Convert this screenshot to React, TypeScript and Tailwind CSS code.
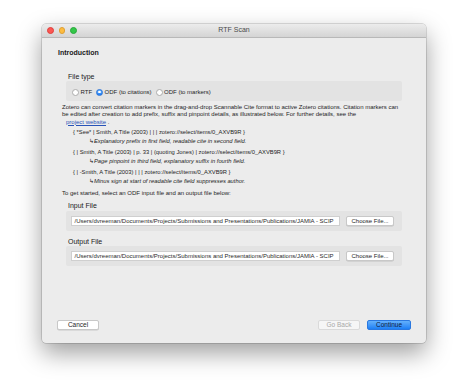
import React from "react";

const font = { fontFamily: '"Liberation Sans", Arial, sans-serif' };

function Radio({ checked, label }: { checked?: boolean; label: string }) {
  return (
    <div className="flex items-center gap-[1.5px]">
      {checked ? (
        <div className="w-[7px] h-[7px] rounded-full bg-gradient-to-b from-[#6cb3fa] to-[#1a7ef5] border border-[#2a73d8] flex items-center justify-center">
          <div className="w-[2.5px] h-[2.5px] rounded-full bg-white" />
        </div>
      ) : (
        <div className="w-[7px] h-[7px] rounded-full bg-white border border-[#acacac]" />
      )}
      <span className="text-[6px] leading-[8px] text-[#1e1e1e]">{label}</span>
    </div>
  );
}

function FileRow({ path }: { path: string }) {
  return (
    <div className="ml-[24px] w-[336px] h-[20px] bg-[#e3e3e3] rounded-[2px] flex items-center pl-[5px] pr-[8px]">
      <div className="w-[269px] h-[10px] bg-white border border-[#cfcfcf] whitespace-nowrap text-[6px] leading-[8px] text-[#2a2a2a] pl-[2.5px]">
        {path}
      </div>
      <div className="ml-[6px] w-[48px] h-[10px] bg-white border border-[#c8c8c8] rounded-[2px] shadow-[0_0.5px_0.5px_rgba(0,0,0,0.15)] flex items-center justify-center text-[6px] leading-[8px] text-[#1e1e1e]">
        Choose File...
      </div>
    </div>
  );
}

function Cite({ code, note }: { code: string; note: string }) {
  return (
    <div className="text-[5.8px] leading-[9px] text-[#1e1e1e]">
      <div className="ml-[31px] whitespace-nowrap">{code}</div>
      <div className="ml-[47px] whitespace-nowrap flex">
        <span className="w-[5px] not-italic">↳</span>
        <span className="italic">{note}</span>
      </div>
    </div>
  );
}

export default function App() {
  const path =
    "/Users/dvreeman/Documents/Projects/Submissions and Presentations/Publications/JAMIA - SCIP";
  return (
    <div className="w-[467px] h-[382px] bg-white overflow-hidden" style={font}>
      <div className="ml-[42px] pt-[24px]">
        <div className="w-[384px] h-[319px] bg-[#ececec] rounded-[4px] shadow-[0_0_0_0.5px_rgba(0,0,0,0.25),0_10px_24px_rgba(0,0,0,0.38)] flex flex-col overflow-hidden">
          {/* title bar */}
          <div className="h-[14px] bg-gradient-to-b from-[#ececec] to-[#d4d4d4] border-b border-[#b8b8b8] flex items-center relative shrink-0">
            <div className="flex gap-[5px] ml-[5px]">
              <div className="w-[6.5px] h-[6.5px] rounded-full bg-[#fc5753] border-[0.5px] border-[#de3f3b]" />
              <div className="w-[6.5px] h-[6.5px] rounded-full bg-[#fdbc40] border-[0.5px] border-[#de9f34]" />
              <div className="w-[6.5px] h-[6.5px] rounded-full bg-[#33c748] border-[0.5px] border-[#27a83a]" />
            </div>
            <div className="absolute inset-0 flex items-center justify-center text-[7px] text-[#4a4a4a]">
              RTF Scan
            </div>
          </div>

          {/* content */}
          <div className="flex flex-col flex-1">
            <div className="mt-[10px] ml-[16px] text-[7px] leading-[9px] font-bold text-[#1a1a1a]">
              Introduction
            </div>

            <div className="mt-[14.5px] ml-[26px] text-[7px] leading-[9px] text-[#1a1a1a]">
              File type
            </div>
            <div className="mt-[0.5px] ml-[24px] w-[336px] h-[20px] bg-[#e3e3e3] rounded-[2px] flex items-center pl-[6px] pt-[2px] gap-[4px]">
              <Radio label="RTF" />
              <Radio checked label="ODF (to citations)" />
              <Radio label="ODF (to markers)" />
            </div>

            <div className="mt-[2.5px] ml-[20px] w-[345px] text-[6px] leading-[7.5px] text-[#1e1e1e]">
              <div className="whitespace-nowrap">
                Zotero can convert citation markers in the drag-and-drop Scannable Cite format to active Zotero citations. Citation markers can
              </div>
              <div className="whitespace-nowrap">
                be edited after creation to add prefix, suffix and pinpoint details, as illustrated below. For further details, see the
              </div>
              <div className="whitespace-nowrap ml-[4px]">
                <span className="text-[#2853b8] underline">project website</span> .
              </div>
            </div>

            <div className="mt-[2px] flex flex-col gap-[2px]">
              <Cite
                code="{ *See* | Smith, A Title (2003) | | | zotero://select/items/0_AXVB9R }"
                note="Explanatory prefix in first field, readable cite in second field."
              />
              <Cite
                code="{ | Smith, A Title (2003) | p. 33 | (quoting Jones) | zotero://select/items/0_AXVB9R }"
                note="Page pinpoint in third field, explanatory suffix in fourth field."
              />
              <Cite
                code="{ | -Smith, A Title (2003) | | | zotero://select/items/0_AXVB9R }"
                note="Minus sign at start of readable cite field suppresses author."
              />
            </div>

            <div className="mt-[3px] ml-[20px] text-[6px] leading-[8px] text-[#1e1e1e] whitespace-nowrap">
              To get started, select an ODF input file and an output file below:
            </div>

            <div className="mt-[4px] ml-[26px] text-[7px] leading-[9px] text-[#1a1a1a]">
              Input File
            </div>
            <div className="mt-[0.5px]">
              <FileRow path={path} />
            </div>

            <div className="mt-[6px] ml-[26px] text-[7px] leading-[9px] text-[#1a1a1a]">
              Output File
            </div>
            <div className="mt-[0.5px]">
              <FileRow path={path} />
            </div>

            <div className="mt-auto mb-[13px] flex items-center px-[15px]">
              <div className="w-[42px] h-[10px] bg-white border border-[#c8c8c8] rounded-[2px] shadow-[0_0.5px_0.5px_rgba(0,0,0,0.15)] flex items-center justify-center text-[6.5px] text-[#1e1e1e]">
                Cancel
              </div>
              <div className="ml-auto w-[42px] h-[10px] bg-[#f6f6f6] border border-[#dadada] rounded-[2px] flex items-center justify-center text-[6.5px] text-[#a8a8a8]">
                Go Back
              </div>
              <div className="ml-[7px] w-[44px] h-[10px] rounded-[2px] bg-gradient-to-b from-[#63b0fb] to-[#1b7ff5] border border-[#2a78e0] flex items-center justify-center text-[6.5px] text-[#0d1b3a]">
                Continue
              </div>
            </div>
          </div>
        </div>
      </div>
    </div>
  );
}
